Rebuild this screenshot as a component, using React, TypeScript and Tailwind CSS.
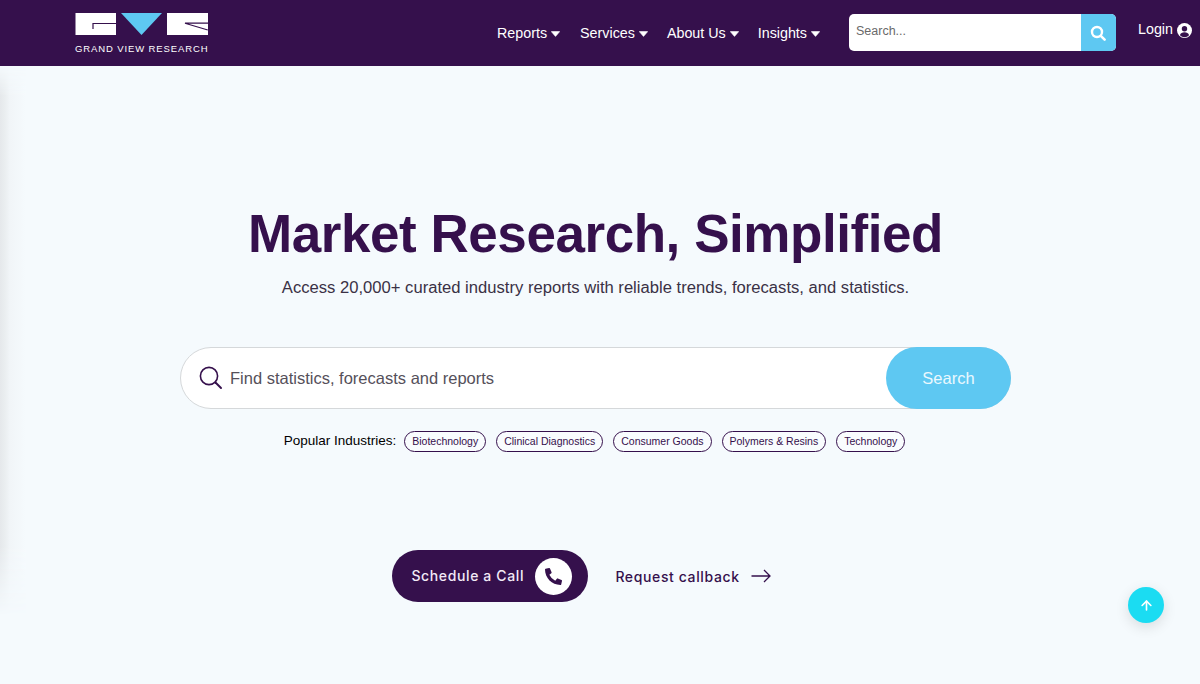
import { ArrowUp } from "lucide-react";
import { FaPhoneAlt } from "react-icons/fa";

const sans = "font-['Liberation_Sans',Arial,sans-serif]";

function Caret() {
  return (
    <svg width="9" height="6" viewBox="0 0 9 6" className="ml-[4px] mt-[1px]">
      <path d="M0.3 0.6h8.4L4.5 5.4z" fill="#ffffff" strokeLinejoin="round" stroke="#ffffff" strokeWidth="0.6" />
    </svg>
  );
}

function Logo() {
  return (
    <div className="flex w-[134px] flex-col">
      <svg width="133" height="23" viewBox="0 0 133 23" className="block">
        <path d="M0.5 1H41V23H0.5z" fill="#ffffff" />
        <path d="M18 17V11.5H41" fill="none" stroke="#35104c" strokeWidth="1.2" />
        <path d="M46 1H87L66.5 23z" fill="#5ec8f2" />
        <path d="M92 1H133V23H92z" fill="#ffffff" />
        <path d="M132.8 18L110 11.2H133" fill="none" stroke="#35104c" strokeWidth="1.2" />
      </svg>
      <div className="mt-[8px] whitespace-nowrap text-[9.5px] leading-[11px] tracking-[0.88px] text-white">
        GRAND VIEW RESEARCH
      </div>
    </div>
  );
}

function NavItem({ label, gap }: { label: string; gap: string }) {
  return (
    <a className={`flex items-center whitespace-nowrap text-[14.3px] leading-[20px] text-white ${gap}`}>
      {label}
      <Caret />
    </a>
  );
}

function Chip({ label }: { label: string }) {
  return (
    <span className="flex h-[21px] items-center rounded-full border border-[#35104c] bg-white/40 px-[7px] text-[10.5px] text-[#35104c]">
      {label}
    </span>
  );
}

export default function App() {
  return (
    <div className={`relative h-[684px] w-[1200px] overflow-hidden bg-[#f5fafd] ${sans}`}>
      <div className="pointer-events-none absolute left-0 top-[66px] h-[550px] w-[26px] bg-[linear-gradient(to_right,#e5e8eb_0,#eaeef0_5px,#f1f5f8_10px,#f5fafd_26px)] [mask-image:linear-gradient(to_bottom,transparent_0,black_30px,black_480px,transparent_100%)]" />
      <header className="relative flex h-[66px] items-center bg-[#35104c] pl-[75px]">
        <div>
          <Logo />
        </div>
        <nav className="ml-[288px] flex items-center">
          <NavItem label="Reports" gap="mr-[20px]" />
          <NavItem label="Services" gap="mr-[19px]" />
          <NavItem label="About Us" gap="mr-[19px]" />
          <NavItem label="Insights" gap="" />
        </nav>
        <div className="ml-[29px] mt-[-1px] flex h-[37px] w-[267px] overflow-hidden rounded-[5px] bg-white">
          <div className="flex flex-1 items-center pl-[7px] pb-[2px] text-[12.5px] text-[#6a6a6a]">Search...</div>
          <div className="flex w-[35px] items-center justify-center bg-[#5ec8f2]">
            <svg width="16" height="16" viewBox="0 0 16 16" fill="none">
              <circle cx="7" cy="7" r="5" stroke="#ffffff" strokeWidth="2.4" />
              <path d="M10.8 10.8L14.6 14.6" stroke="#ffffff" strokeWidth="2.6" strokeLinecap="round" />
            </svg>
          </div>
        </div>
        <div className="ml-[22px] mt-[-6px] flex items-center text-[14.3px] text-white">
          Login
          <svg width="15" height="15" viewBox="0 0 15 15" className="ml-[4px]">
            <circle cx="7.5" cy="7.5" r="7.5" fill="#ffffff" />
            <circle cx="7.5" cy="5.8" r="2.7" fill="#35104c" />
            <path d="M2.9 12.2c.7-2.2 2.4-3 4.6-3s3.900.8 4.600 3a6.200 6.200 0 0 1-9.200 0z" fill="#35104c" />
          </svg>
        </div>
      </header>

      <main className="flex flex-col items-center">
        <h1 className="mt-[137px] ml-[-9px] text-[53px] font-bold leading-[62px] tracking-[-0.45px] text-[#35104c]">
          Market Research, Simplified
        </h1>
        <p className="mt-[11px] ml-[-9px] text-[16.63px] leading-[24px] text-[#3a3145]">
          Access 20,000+ curated industry reports with reliable trends, forecasts, and statistics.
        </p>

        <div className="ml-[-9px] mt-[47px] flex h-[62px] w-[831px] items-center rounded-full border border-[#d5d8da] bg-white">
          <svg width="24" height="24" viewBox="0 0 24 24" fill="none" className="ml-[18px] shrink-0">
            <circle cx="10" cy="10" r="8.600" stroke="#35104c" strokeWidth="1.600" />
            <path d="M16.500 16.500L22 22" stroke="#35104c" strokeWidth="2" strokeLinecap="round" />
          </svg>
          <span className="ml-[7px] flex-1 text-[16.500px] text-[#55505a]">Find statistics, forecasts and reports</span>
          <button className="mr-[-1px] h-[62px] w-[125px] rounded-full bg-[#5ec8f2] text-[16.500px] text-[#eaf8fe]">
            Search
          </button>
        </div>

        <div className="ml-[-11px] mt-[22px] flex items-center">
          <span className="mr-[8px] text-[13.500px] text-black">Popular Industries:</span>
          <div className="flex gap-[10px]">
            <Chip label="Biotechnology" />
            <Chip label="Clinical Diagnostics" />
            <Chip label="Consumer Goods" />
            <Chip label="Polymers &amp; Resins" />
            <Chip label="Technology" />
          </div>
        </div>

        <div className="ml-[-37px] mt-[98px] flex items-center font-['Inter',sans-serif]">
          <a className="flex h-[52px] w-[196px] items-center justify-between rounded-full bg-[#35104c] pl-[19px] pr-[16px] pb-[1px] text-[14px] font-medium tracking-[0.63px] text-[#f2eaf7]">
            Schedule a Call
            <span className="mt-[1px] flex h-[37px] w-[37px] items-center justify-center rounded-full bg-white">
              <FaPhoneAlt size={17} color="#35104c" />
            </span>
          </a>
          <a className="ml-[27px] flex items-center text-[14px] font-medium tracking-[0.62px] text-[#35104c]">
            Request callback
            <svg width="20" height="14" viewBox="0 0 20 14" fill="none" className="ml-[11px]">
              <path d="M0.500 7H19M13 1l6 6-6 6" stroke="#35104c" strokeWidth="1.300" />
            </svg>
          </a>
        </div>
      </main>

      <button className="absolute left-[1128px] top-[587px] flex h-[36px] w-[36px] items-center justify-center rounded-full bg-[#1bdcf2] shadow-[0_4px_14px_rgba(0,0,0,0.12)]">
        <ArrowUp size={15} strokeWidth={2.600} color="#ffffff" />
      </button>
    </div>
  );
}
